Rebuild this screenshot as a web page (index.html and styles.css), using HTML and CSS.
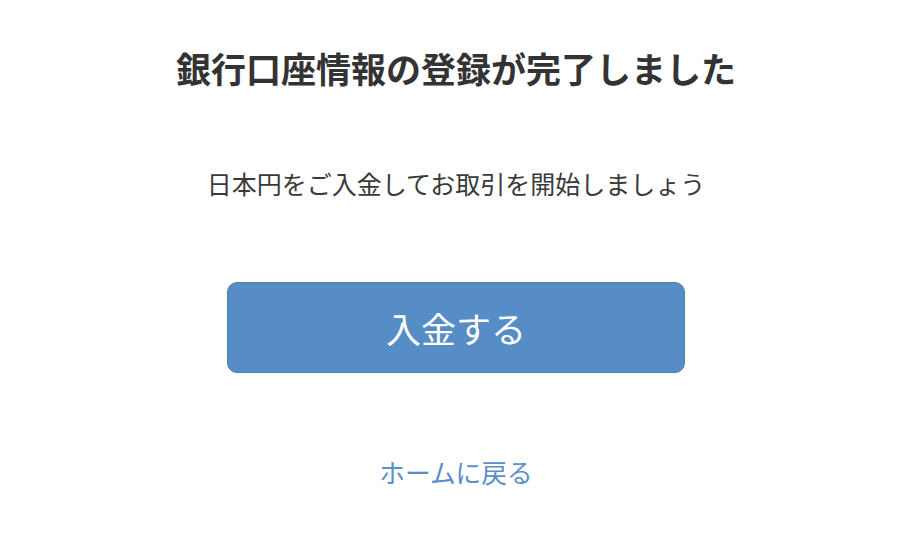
FILE: index.html
```html
<!DOCTYPE html>
<html lang="ja">
<head>
    <meta charset="UTF-8">
    <meta name="viewport" content="width=device-width, initial-scale=1.0">
    <title>登録完了</title>
    <link rel="stylesheet" href="styles.css">
</head>
<body>
    <div class="complete">
        <h1 class="complete__title">銀行口座情報の登録が完了しました</h1>
        <p class="complete__lead">日本円をご入金してお取引を開始しましょう</p>
        <a class="complete__button" href="#">入金する</a>
        <a class="complete__link" href="#">ホームに戻る</a>
    </div>
</body>
</html>
```

FILE: styles.css
```css
body {
    margin: 0;
    background: #ffffff;
    color: #333333;
    font-family: "Noto Sans CJK JP", "Noto Sans", sans-serif;
}

.complete {
    display: flex;
    flex-direction: column;
    align-items: center;
    padding: 43px 0 0 4px;
}

.complete__title {
    margin: 0;
    font-size: 35px;
    line-height: 50px;
    font-weight: 700;
    color: #333333;
}

.complete__lead {
    margin: 73px 0 0;
    font-size: 25px;
    line-height: 34px;
    color: #3a3a3a;
}

.complete__button {
    display: flex;
    align-items: center;
    justify-content: center;
    box-sizing: border-box;
    width: 458px;
    height: 91px;
    margin-top: 82px;
    background: #568dc6;
    border: 1px solid #4a84a6;
    border-radius: 10px;
    color: #ffffff;
    font-size: 35px;
    text-decoration: none;
}

.complete__link {
    margin-top: 82px;
    font-size: 25.7px;
    line-height: 34px;
    color: #5a8fc8;
    text-decoration: none;
}
```
